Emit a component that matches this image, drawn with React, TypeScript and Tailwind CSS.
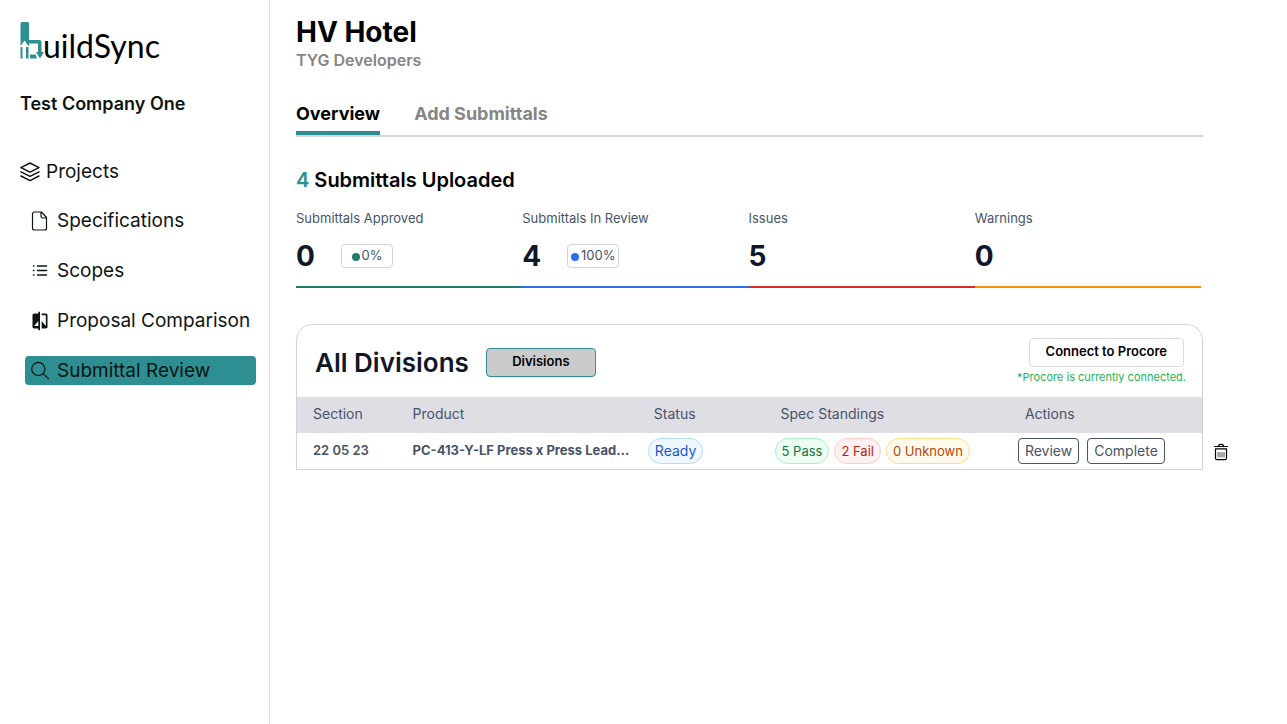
import React from 'react'
import { MdCompare } from 'react-icons/md'

const navItems = [
  { label: 'Specifications', icon: 'file' },
  { label: 'Scopes', icon: 'list' },
  { label: 'Proposal Comparison', icon: 'compare' },
  { label: 'Submittal Review', icon: 'search' },
]

const stats = [
  { label: 'Submittals Approved', value: '0', percent: '0%', dot: 'bg-[#217c6b]', line: 'border-[#217c6b]' },
  { label: 'Submittals In Review', value: '4', percent: '100%', dot: 'bg-[#2970f0]', line: 'border-[#2970f0]' },
  { label: 'Issues', value: '5', line: 'border-[#dc2a1e]' },
  { label: 'Warnings', value: '0', line: 'border-[#f79009]' },
]

const NavIcon = ({ name }: { name: string }) => {
  if (name === 'compare') return <MdCompare className="-ml-px size-5 shrink-0" />
  return (
    <svg className="-ml-px size-5 shrink-0" viewBox="0 0 20 20" fill="none" stroke="currentColor" strokeWidth="1.2" strokeLinecap="round" strokeLinejoin="round">
      {name === 'file' && <path d="M11.500 1H4.500a2 2 0 0 0-2 2v14a2 2 0 0 0 2 2h10a2 2 0 0 0 2-2V6.500zM11 1v4.200A1.800 1.800 0 0 0 12.800 7h3.700" />}
      {name === 'list' && <path strokeWidth="1.500" d="M7.500 5h9M7.500 9.500h9M7.500 14h9M3.500 5h.4M3.500 9.500h.4M3.500 14h.4" />}
      {name === 'search' && (
        <>
          <circle cx="8.300" cy="8" r="6.600" />
          <path d="m13.200 12.900 5.600 5" />
        </>
      )}
    </svg>
  )
}

const StackIcon = () => (
  <svg className="size-5 shrink-0" viewBox="0 0 20 20" fill="none" stroke="currentColor" strokeWidth="1.500" strokeLinejoin="round" strokeLinecap="round">
    <path d="M10 1 1 5.600l9 4.600 9-4.600zM1 9.800l9 4.600 9-4.600M1 14l9 4.600L19 14" />
  </svg>
)

const TrashIcon = () => (
  <svg className="h-[18px] w-4" viewBox="0 0 16 18" fill="none" stroke="currentColor" strokeLinecap="round">
    <path strokeWidth="1.200" d="M1.500 3.500h13M5.500 3C5.500.8 10.500.8 10.500 3M2.500 5.800h11M2.500 5.800v9.400a1.500 1.500 0 0 0 1.500 1.500h8a1.500 1.500 0 0 0 1.500-1.500V5.800" />
    <path strokeWidth=".7" d="M5 9.500v4.500M7 9.500v4.500M9 9.500v4.500M11 9.500v4.500" />
  </svg>
)

const Logo = () => (
  <svg className="h-12 w-[142px]" viewBox="0 0 142 48" role="img" aria-label="buildSync">
    {/* stem, with the head of the white arrow cut out of it */}
    <path fill="#2d8f91" d="M2 2h5.500Q9 2 9 3.500V26h-.5L4.500 20.500.5 26V3.500Q.5 2 2 2z" />
    <path fill="#2d8f91" d="M.5 27H2.500v11.500h-2zM6 27h2.500v11.500H6z" />
    {/* bowl, ending in the arrow that points down */}
    <path fill="#2d8f91" d="M9 20h10.500q2 0 2 2v10H24l-4 6.500-4-6.500h2v-8.500H9z" />
    <path fill="#2d8f91" d="M10 34.500h5.500l1.500 4h-7z" />
    <text x="23" y="38" fontFamily="Lato, sans-serif" fontSize="32">uildSync</text>
  </svg>
)

const Sidebar = () => (
  <aside className="w-[270px] shrink-0 border-r border-[#e0e0e6] px-5 pt-5 text-[#0c1414]">
    <Logo />
    <h2 className="mt-6 text-lg leading-6 font-semibold whitespace-nowrap">Test Company One</h2>
    <nav className="mt-[42px] text-[19px] leading-7">
      <a href="#" className="flex h-7 items-center gap-1.5">
        <StackIcon />
        Projects
      </a>
      <ul className="mt-5 -mr-[7px] ml-[5px] space-y-[21px]">
        {navItems.map((item) => (
          <li key={item.label}>
            <a href="#" className={`flex h-[29px] items-center gap-[7px] rounded px-1.5 whitespace-nowrap ${item.icon === 'search' ? 'bg-[#2d8f91]' : ''}`}>
              <NavIcon name={item.icon} />
              {item.label}
            </a>
          </li>
        ))}
      </ul>
    </nav>
  </aside>
)

const Stats = () => (
  <div className="mt-[13px] grid grid-cols-4 pr-0.5">
    {stats.map((stat) => (
      <div key={stat.label} className={`border-b-2 pb-2.5 ${stat.line}`}>
        <p className="text-[13px] leading-5 text-[#475467]">{stat.label}</p>
        <div className="mt-2 flex h-10 items-center gap-6">
          <span className="w-[21px] text-[28px] font-bold text-[#101828]">{stat.value}</span>
          {stat.percent && (
            <span className="flex h-6 w-[52px] items-center justify-center gap-0.5 rounded border border-[#d0d5dd] text-[13px] text-[#475467]">
              <span className={`mt-0.5 size-2 shrink-0 rounded-full ${stat.dot}`} />
              {stat.percent}
            </span>
          )}
        </div>
      </div>
    ))}
  </div>
)

const Divisions = () => (
  <section className="mt-9 rounded-t-2xl border border-[#d0d5dd]">
    <div className="flex h-[72px] items-center pt-0.5 pr-4 pl-[18px]">
      <h2 className="text-[26px] font-semibold whitespace-nowrap text-[#101828]">All Divisions</h2>
      <button className="ml-[17px] h-[29px] w-[110px] rounded border border-[#2d8f91] bg-[#cbcbcb] text-[13px] font-semibold">
        Divisions
      </button>
      <div className="ml-auto flex flex-col items-end">
        <button className="mr-0.5 h-[29px] rounded border border-[#d8dae2] px-4 text-[13px] font-semibold">
          Connect to Procore
        </button>
        <p className="text-[11px] leading-5 text-[#1fb155]">*Procore is currently connected.</p>
      </div>
    </div>
    <table className="w-full table-fixed text-left whitespace-nowrap text-[#475467]">
      <thead>
        <tr className="h-9 bg-[#dfdee5] text-[14px]">
          <th className="w-[11%] pb-1 pl-4 font-normal">Section</th>
          <th className="w-[26%] pb-1 pl-4 font-normal">Product</th>
          <th className="w-[14%] pb-1 pl-[22px] font-normal">Status</th>
          <th className="w-[27%] pb-1 pl-[22px] font-normal">Spec Standings</th>
          <th className="w-[22%] pb-1 pl-[22px] font-normal">Actions</th>
        </tr>
      </thead>
      <tbody>
        <tr className="h-9 text-[13px]">
          <td className="pl-4 font-semibold">22 05 23</td>
          <td className="truncate pl-4 font-bold">PC-413-Y-LF Press x Press Lead…</td>
          <td className="pl-4 text-[14px]">
            <span className="inline-block rounded-full border border-[#b2ddff] bg-[#eff8ff] px-1.5 leading-6 text-[#1d56d4]">Ready</span>
          </td>
          <td className="pl-4">
            <div className="flex gap-[5px] leading-6">
              <span className="rounded-full border border-[#abefc6] bg-[#ecfdf3] px-1.5 text-[#1b7340]">5 Pass</span>
              <span className="rounded-full border border-[#fecdca] bg-[#fef1f1] px-1.5 text-[#b42318]">2 Fail</span>
              <span className="rounded-full border border-[#fedf89] bg-[#fffaeb] px-1.5 text-[#b54708]">0 Unknown</span>
            </div>
          </td>
          <td className="relative pl-[15px] text-[14px]">
            <div className="flex gap-2 leading-6">
              <button className="rounded border border-[#475467] px-1.5">Review</button>
              <button className="rounded border border-[#475467] px-1.5">Complete</button>
            </div>
            <button aria-label="Delete" className="absolute top-2.5 left-full ml-[11px] text-black">
              <TrashIcon />
            </button>
          </td>
        </tr>
      </tbody>
    </table>
  </section>
)

const App = () => {
  return (
    <div className="flex min-h-screen bg-white font-['Inter',sans-serif] text-black">
      <Sidebar />
      <main className="min-w-0 flex-1 pt-4 pr-[84px] pl-[26px]">
        <h1 className="text-[28px] leading-8 font-bold">HV Hotel</h1>
        <p className="text-base leading-6 font-semibold text-[#858585]">TYG Developers</p>
        {/* Tabs */}
        <div className="mt-[30px] flex gap-[34px] border-b-2 border-[#d5d4dc] text-lg leading-6 font-bold">
          <button className="border-b-4 border-[#2d8f91] pb-[5px]">Overview</button>
          <button className="border-b-4 border-transparent pb-[5px] text-[#858585]">Add Submittals</button>
        </div>
        <h3 className="mt-7 text-xl leading-[30px] font-semibold">
          <span className="text-[#2d8f91]">4</span> Submittals Uploaded
        </h3>
        <Stats />
        <Divisions />
      </main>
    </div>
  )
}

export default App
